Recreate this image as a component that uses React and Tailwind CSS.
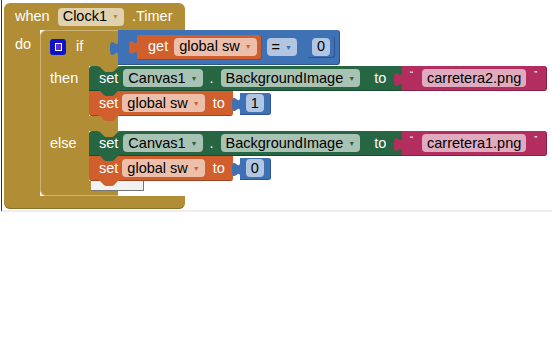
import React from 'react';

// Blockly-ish palette (App Inventor)
// gold #b18e35, blue #3f71b5, orange #d05f2d, green #266643, pink #b32d5e

function Tab({ color }) {
  return (
    <svg width="8" height="20" viewBox="-8 0 8 20" className={`shrink-0 ${color}`}>
      <path d="M0,3 c0,10 -8,-8 -8,7.5 s8,-2.5 8,7.5 Z" fill="currentColor" />
    </svg>
  );
}

// statement connection tab (hangs below a block / fills the notch of the next one)
function Notch({ color, className }) {
  return (
    <svg width="24" height="6" viewBox="0 0 24 6" className={`absolute z-10 ${color} ${className}`}>
      <path d="M0,0 C2,0 3,1 4,2 L7,5 C8,6 9,6 10,6 H14 C15,6 16,6 17,5 L20,2 C21,1 22,0 24,0 Z" fill="currentColor" />
    </svg>
  );
}

function Field({ children, bg, arrow }) {
  return (
    <span className={`flex h-[18px] items-center rounded-[4px] px-[5px] text-black ${bg}`}>
      {children}
      {arrow && <span className={`ml-[5px] text-[7px] leading-none ${arrow}`}>▼</span>}
    </span>
  );
}

function NumberBlock({ value, wide }) {
  return (
    <div className="flex items-center">
      <Tab color="text-[#3f71b5]" />
      <div className={`flex h-[22px] items-center rounded-r-[3px] border-b border-r border-[#2e5590] bg-[#3f71b5] ${wide ? 'px-[6px]' : 'px-[4px]'}`}>
        <Field bg="bg-[#b2c6e1]">{value}</Field>
      </div>
    </div>
  );
}

function SetVar({ value }) {
  return (
    <div className="relative flex items-center">
      <div className="flex h-[25px] items-center gap-[4px] rounded-b-[3px] border-b border-[#9c4522] bg-[#d05f2d] pl-[10px] text-white">
        <span>set</span>
        <Field bg="bg-[#ecbfab]" arrow="text-[#d05f2d]">global sw</Field>
        <span className="ml-[4px] mr-[8px]">to</span>
      </div>
      <div className="-ml-[1px]">
        <NumberBlock value={value} wide />
      </div>
      <Notch color="text-[#d05f2d]" className="left-[8px] top-[24px]" />
    </div>
  );
}

function SetProp({ file }) {
  return (
    <div className="relative flex items-center">
      <div className="flex h-[25px] w-[313px] items-center gap-[5px] rounded-tl-[3px] border-b border-[#1a4a30] bg-[#266643] pl-[10px] text-white">
        <span>set</span>
        <Field bg="bg-[#a8c2b4]" arrow="text-[#266643]">Canvas1</Field>
        <span className="px-[2px]">.</span>
        <Field bg="bg-[#a8c2b4]" arrow="text-[#266643]">BackgroundImage</Field>
        <span className="ml-[9px]">to</span>
      </div>
      <div className="-ml-[8px] flex items-center">
        <Tab color="text-[#b32d5e]" />
        <div className="flex h-[25px] w-[145px] items-center rounded-r-[3px] border-b border-r border-[#862246] bg-[#b32d5e] pl-[8px] text-white">
          <span className="mb-[8px] text-[9px] leading-none">“</span>
          <span className="ml-[9px]">
            <Field bg="bg-[#e1abbf]">{file}</Field>
          </span>
          <span className="mb-[8px] ml-[8px] text-[9px] leading-none">”</span>
        </div>
      </div>
      <Notch color="text-[#b18e35]" className="left-[8px] top-0" />
      <Notch color="text-[#266643]" className="left-[8px] top-[24px]" />
    </div>
  );
}

function CompareBlock() {
  return (
    <div className="-ml-[8px] flex items-center">
      <Tab color="text-[#3f71b5]" />
      <div className="flex h-[35px] items-center rounded-r-[3px] border-b border-r border-[#2e5590] bg-[#3f71b5] pl-[11px] pr-[4px]">
        <div className="flex items-center">
          <Tab color="text-[#d05f2d]" />
          <div className="flex h-[25px] items-center gap-[6px] rounded-r-[3px] border-b border-r border-[#9c4522] bg-[#d05f2d] pl-[11px] pr-[4px] text-white">
            <span>get</span>
            <Field bg="bg-[#ecbfab]" arrow="text-[#d05f2d]">global sw</Field>
          </div>
        </div>
        <span className="ml-[5px]">
          <Field bg="bg-[#b2c6e1]" arrow="text-[#3f71b5]">=</Field>
        </span>
        <span className="ml-[3px]">
          <NumberBlock value="0" />
        </span>
      </div>
    </div>
  );
}

function Mutator() {
  return (
    <div className="flex h-[16px] w-[16px] items-center justify-center rounded-[3px] bg-[#0a14c8]">
      <div className="h-[8px] w-[7px] border border-white bg-[#5a2fd0]" />
    </div>
  );
}

function IfBlock() {
  return (
    <div className="flex flex-col">
      <div className="flex h-[36px] items-start">
        <div className="flex h-[36px] w-[78px] items-center gap-[10px] rounded-tl-[6px] border-l border-t border-[#cdb370] bg-[#b18e35] pl-[9px] pb-[4px] text-white">
          <Mutator />
          <span>if</span>
        </div>
        <CompareBlock />
      </div>
      <div className="flex">
        <div className="w-[49px] border-l border-[#cdb370] bg-[#b18e35] pl-[9px] pt-[5px] text-white">then</div>
        <div className="flex flex-col">
          <SetProp file="carretera2.png" />
          <SetVar value="1" />
        </div>
      </div>
      <div className="h-[15px] w-[78px] border-l border-[#cdb370] bg-[#b18e35]" />
      <div className="flex">
        <div className="w-[49px] border-l border-[#cdb370] bg-[#b18e35] pl-[9px] pt-[5px] text-white">else</div>
        <div className="flex flex-col">
          <SetProp file="carretera1.png" />
          <SetVar value="0" />
        </div>
      </div>
      <div className="h-[15px] w-[78px] rounded-bl-[6px] border-b border-l border-[#cdb370] bg-[#b18e35]" />
    </div>
  );
}

export default function App() {
  return (
    <div className="h-[350px] w-[552px] bg-white font-['Liberation_Sans',Arial,sans-serif] text-[14.5px] leading-none">
      <div className="relative ml-px h-[212px] border-b-2 border-l border-b-[#eeeeee] border-l-[#333333]">
        <div className="absolute left-[2px] top-[3px] flex flex-col">
          <div className="flex h-[27px] w-[181px] items-center gap-[8px] rounded-t-[6px] bg-[#b18e35] pl-[11px] text-white">
            <span>when</span>
            <Field bg="bg-[#e0d2ae]" arrow="text-[#b18e35]">Clock1</Field>
            <span>.Timer</span>
          </div>
          <div className="flex">
            <div className="w-[36px] bg-[#b18e35] pl-[11px] pt-[7px] text-white">do</div>
            <IfBlock />
          </div>
          <div className="h-[13px] w-[181px] rounded-b-[6px] border-b border-[#8a6e29] bg-[#b18e35]" />
        </div>
        {/* edge of a block hidden under the last setter */}
        <div className="absolute left-[89px] top-[181px] h-[10px] w-[53px] border-b border-r border-[#777777] bg-[#f2f2f2]" />
      </div>
    </div>
  );
}
